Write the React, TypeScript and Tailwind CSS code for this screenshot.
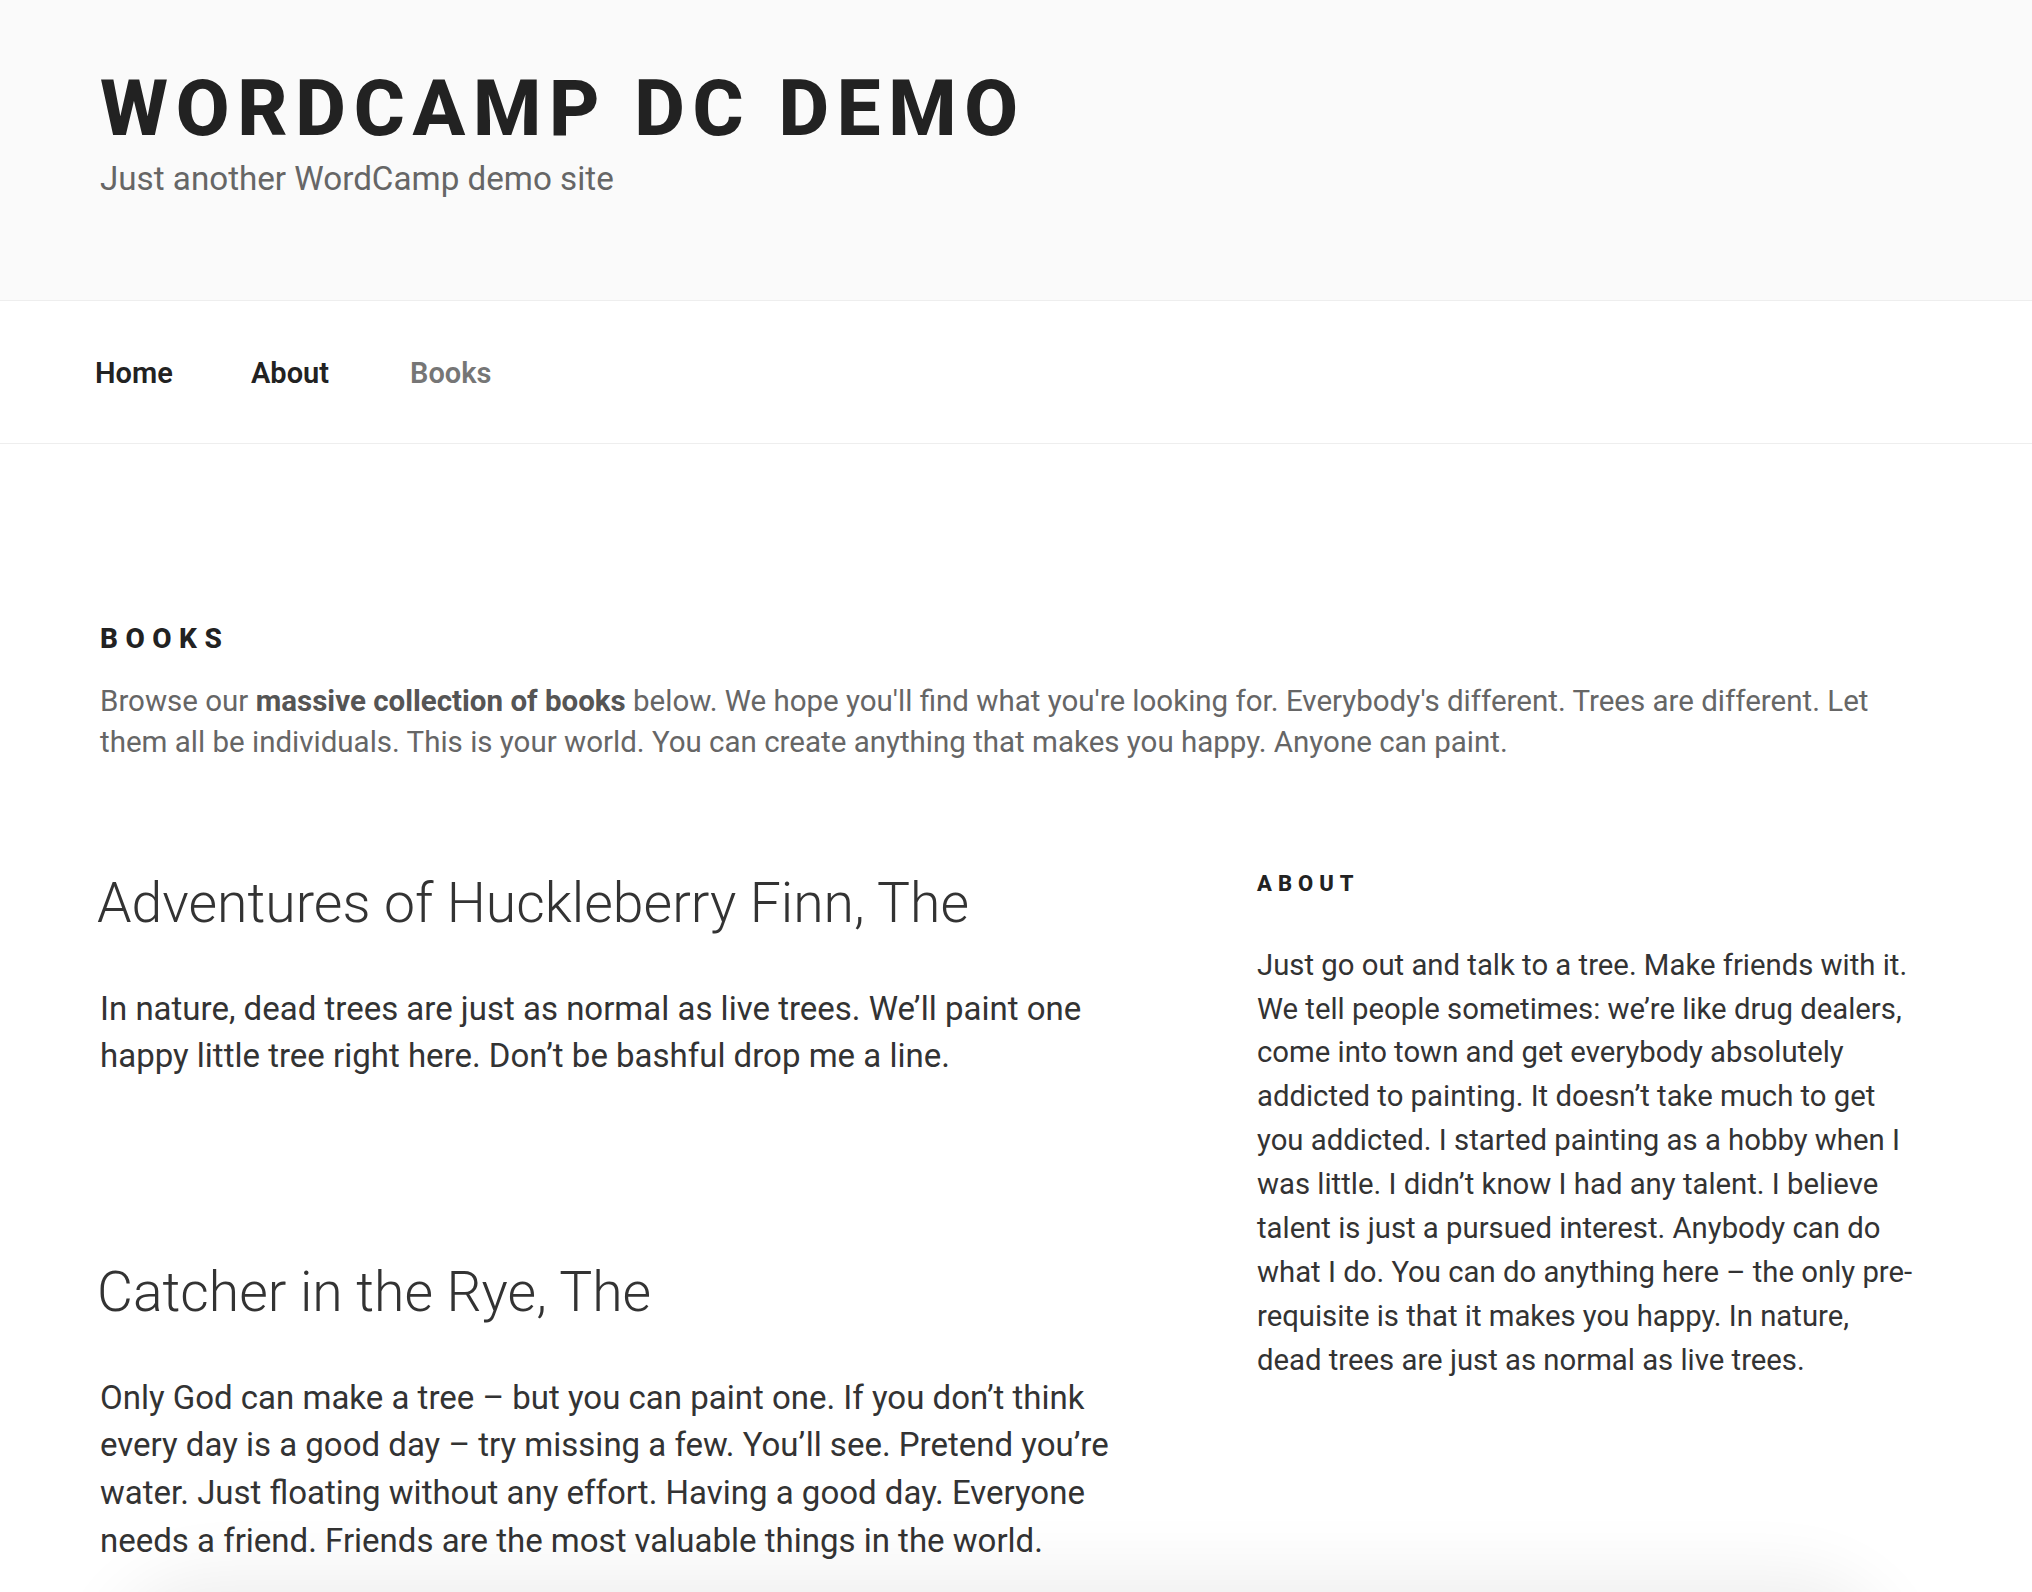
const font = "font-['Roboto','Liberation_Sans',sans-serif]";

const navItems = [
  { label: "Home", current: false, width: "w-[156px]" },
  { label: "About", current: false, width: "w-[159px]" },
  { label: "Books", current: true, width: "" },
];

const books = [
  {
    title: "Adventures of Huckleberry Finn, The",
    body: "In nature, dead trees are just as normal as live trees. We’ll paint one happy little tree right here. Don’t be bashful drop me a line.",
  },
  {
    title: "Catcher in the Rye, The",
    body: "Only God can make a tree – but you can paint one. If you don’t think every day is a good day – try missing a few. You’ll see. Pretend you’re water. Just floating without any effort. Having a good day. Everyone needs a friend. Friends are the most valuable things in the world.",
  },
];

export default function App() {
  return (
    <div className={`${font} relative h-[1592px] overflow-hidden bg-white`}>
      {/* Site header */}
      <header className="h-[301px] bg-[#fafafa] border-b border-[#eeeeee] pl-[100px] pt-[70px]">
        <h1 className="text-[78px] leading-[78px] font-extrabold uppercase tracking-[7.7px] text-[#222222]">
          WordCamp DC Demo
        </h1>
        <p className="mt-[11px] text-[33.2px] leading-[40px] text-[#666666]">
          Just another WordCamp demo site
        </p>
      </header>

      {/* Navigation */}
      <nav className="h-[143px] border-b border-[#eeeeee] pt-[4px] flex items-center pl-[95px]">
        <ul className="flex">
          {navItems.map((item) => (
            <li
              key={item.label}
              className={`${item.width} text-[29px] font-semibold ${
                item.current ? "text-[#767676]" : "text-[#222222]"
              }`}
            >
              {item.label}
            </li>
          ))}
        </ul>
      </nav>

      {/* Content */}
      <main className="pl-[100px] pt-[181px]">
        <h2 className="text-[28px] leading-[28px] font-extrabold uppercase tracking-[7.5px] text-[#222222]">
          Books
        </h2>
        <p className="mt-[28px] w-[1800px] text-[29.5px] leading-[41.3px] text-[#666666]">
          Browse our <strong className="font-bold text-[#555555]">massive collection of books</strong> below.
          We hope you'll find what you're looking for. Everybody's different. Trees are different. Let them
          all be individuals. This is your world. You can create anything that makes you happy. Anyone can
          paint.
        </p>

        <div className="mt-[107px] flex items-start">
          <div className="w-[1040px]">
            {books.map((book, i) => (
              <article key={book.title} className={i > 0 ? "mt-[180px]" : ""}>
                <h3 className="text-[55.3px] leading-[66px] font-light text-[#333333] -ml-[3px]">
                  {book.title}
                </h3>
                <p className="mt-[48px] text-[33px] leading-[47.6px] text-[#333333]">{book.body}</p>
              </article>
            ))}
          </div>

          <aside className="ml-[117px] w-[660px] pt-[2px]">
            <h2 className="text-[22px] leading-[22px] font-extrabold uppercase tracking-[6px] text-[#222222]">
              About
            </h2>
            <p className="mt-[49px] text-[29.3px] leading-[43.9px] text-[#333333]">
              Just go out and talk to a tree. Make friends with it. We tell people sometimes: we’re like
              drug dealers, come into town and get everybody absolutely addicted to painting. It doesn’t
              take much to get you addicted. I started painting as a hobby when I was little. I didn’t know
              I had any talent. I believe talent is just a pursued interest. Anybody can do what I do. You
              can do anything here – the only pre-requisite is that it makes you happy. In nature, dead
              trees are just as normal as live trees.
            </p>
          </aside>
        </div>
      </main>

      {/* soft shadow of the window edge below */}
      <div className="pointer-events-none absolute left-[130px] top-[1600px] h-[200px] w-[1740px] rounded-[80px] shadow-[0_0_70px_25px_rgba(0,0,0,0.07)]" />
    </div>
  );
}
